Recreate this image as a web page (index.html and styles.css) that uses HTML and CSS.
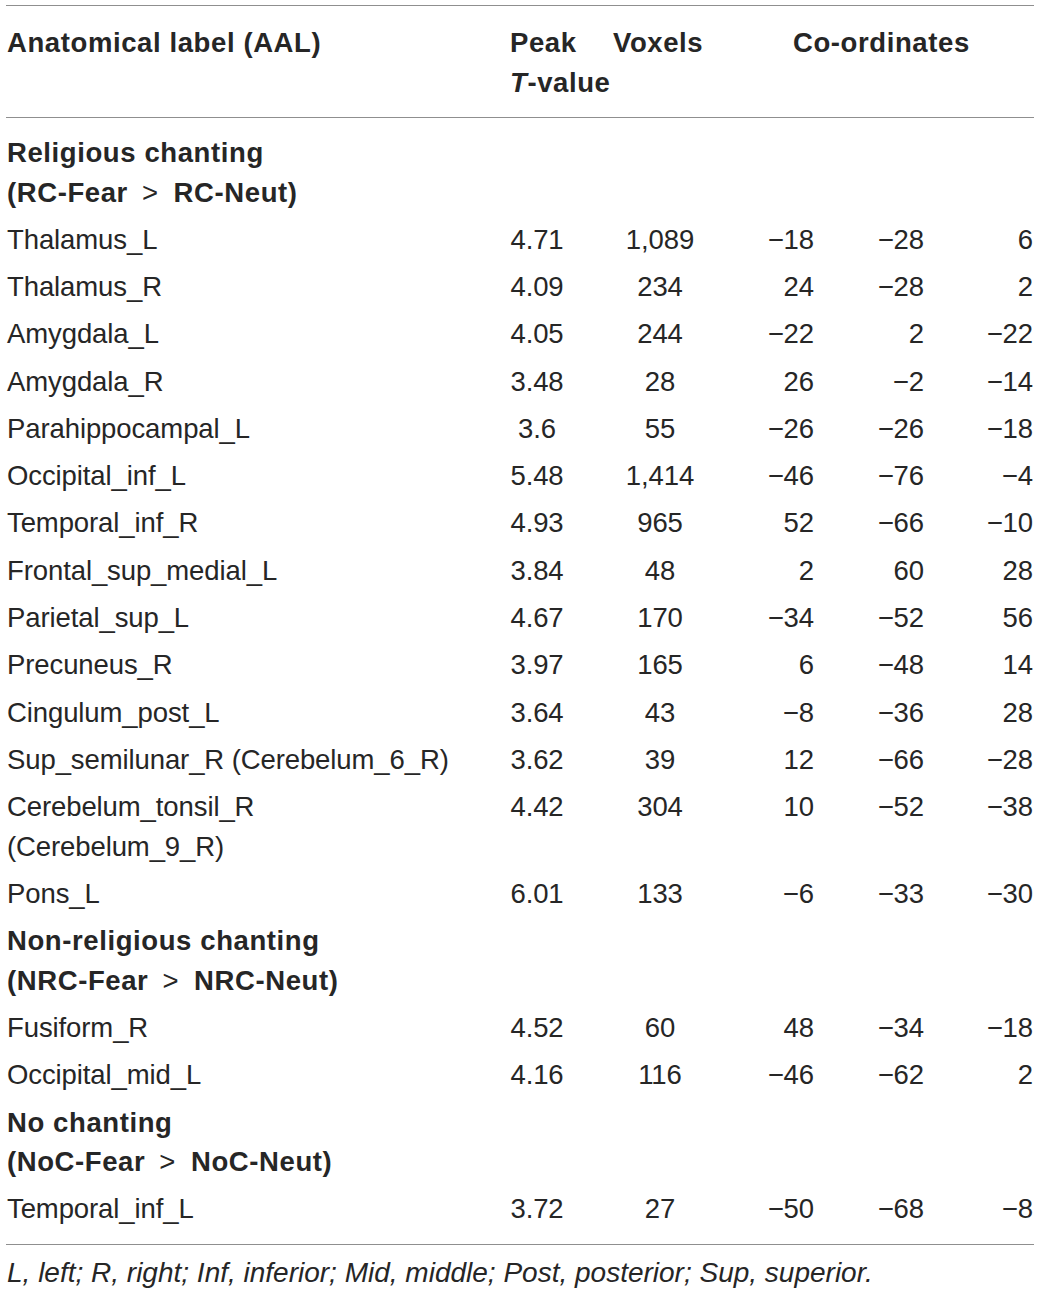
FILE: index.html
```html
<!DOCTYPE html>
<html>
<head>
<meta charset="utf-8">
<link rel="stylesheet" href="styles.css">
</head>
<body>
<div class="wrap">
<table class="tbl">
  <colgroup>
    <col class="c-label">
    <col class="c-peak">
    <col class="c-vox">
    <col class="c-x">
    <col class="c-y">
    <col class="c-z">
  </colgroup>
  <thead>
    <tr>
      <th class="h-label">Anatomical label (AAL)</th>
      <th class="h-peak">Peak<br><i>T</i>-value</th>
      <th class="h-vox">Voxels</th>
      <th class="h-coord" colspan="3">Co-ordinates</th>
    </tr>
  </thead>
  <tbody>
    <tr class="sec"><td colspan="6">Religious chanting<br>(RC-Fear<span class="gt">&gt;</span>RC-Neut)</td></tr>
    <tr><td>Thalamus_L</td><td class="peak">4.71</td><td class="vox">1,089</td><td class="cx">&minus;18</td><td class="cy">&minus;28</td><td class="cz">6</td></tr>
    <tr><td>Thalamus_R</td><td class="peak">4.09</td><td class="vox">234</td><td class="cx">24</td><td class="cy">&minus;28</td><td class="cz">2</td></tr>
    <tr><td>Amygdala_L</td><td class="peak">4.05</td><td class="vox">244</td><td class="cx">&minus;22</td><td class="cy">2</td><td class="cz">&minus;22</td></tr>
    <tr><td>Amygdala_R</td><td class="peak">3.48</td><td class="vox">28</td><td class="cx">26</td><td class="cy">&minus;2</td><td class="cz">&minus;14</td></tr>
    <tr><td>Parahippocampal_L</td><td class="peak">3.6</td><td class="vox">55</td><td class="cx">&minus;26</td><td class="cy">&minus;26</td><td class="cz">&minus;18</td></tr>
    <tr><td>Occipital_inf_L</td><td class="peak">5.48</td><td class="vox">1,414</td><td class="cx">&minus;46</td><td class="cy">&minus;76</td><td class="cz">&minus;4</td></tr>
    <tr><td>Temporal_inf_R</td><td class="peak">4.93</td><td class="vox">965</td><td class="cx">52</td><td class="cy">&minus;66</td><td class="cz">&minus;10</td></tr>
    <tr><td>Frontal_sup_medial_L</td><td class="peak">3.84</td><td class="vox">48</td><td class="cx">2</td><td class="cy">60</td><td class="cz">28</td></tr>
    <tr><td>Parietal_sup_L</td><td class="peak">4.67</td><td class="vox">170</td><td class="cx">&minus;34</td><td class="cy">&minus;52</td><td class="cz">56</td></tr>
    <tr><td>Precuneus_R</td><td class="peak">3.97</td><td class="vox">165</td><td class="cx">6</td><td class="cy">&minus;48</td><td class="cz">14</td></tr>
    <tr><td>Cingulum_post_L</td><td class="peak">3.64</td><td class="vox">43</td><td class="cx">&minus;8</td><td class="cy">&minus;36</td><td class="cz">28</td></tr>
    <tr><td>Sup_semilunar_R (Cerebelum_6_R)</td><td class="peak">3.62</td><td class="vox">39</td><td class="cx">12</td><td class="cy">&minus;66</td><td class="cz">&minus;28</td></tr>
    <tr><td>Cerebelum_tonsil_R<br>(Cerebelum_9_R)</td><td class="peak">4.42</td><td class="vox">304</td><td class="cx">10</td><td class="cy">&minus;52</td><td class="cz">&minus;38</td></tr>
    <tr><td>Pons_L</td><td class="peak">6.01</td><td class="vox">133</td><td class="cx">&minus;6</td><td class="cy">&minus;33</td><td class="cz">&minus;30</td></tr>
    <tr class="sec"><td colspan="6">Non-religious chanting<br>(NRC-Fear<span class="gt">&gt;</span>NRC-Neut)</td></tr>
    <tr><td>Fusiform_R</td><td class="peak">4.52</td><td class="vox">60</td><td class="cx">48</td><td class="cy">&minus;34</td><td class="cz">&minus;18</td></tr>
    <tr><td>Occipital_mid_L</td><td class="peak">4.16</td><td class="vox">116</td><td class="cx">&minus;46</td><td class="cy">&minus;62</td><td class="cz">2</td></tr>
    <tr class="sec"><td colspan="6">No chanting<br>(NoC-Fear<span class="gt">&gt;</span>NoC-Neut)</td></tr>
    <tr class="last"><td>Temporal_inf_L</td><td class="peak">3.72</td><td class="vox">27</td><td class="cx">&minus;50</td><td class="cy">&minus;68</td><td class="cz">&minus;8</td></tr>
  </tbody>
</table>
<p class="note"><i>L, left; R, right; Inf, inferior; Mid, middle; Post, posterior; Sup, superior.</i></p>
</div>
</body>
</html>
```

FILE: styles.css
```css
html, body {
  margin: 0;
  padding: 0;
  background: #ffffff;
}

body {
  font-family: "Liberation Sans", Arial, sans-serif;
  font-size: 27.5px;
  letter-spacing: -0.1px;
  color: #262626;
}

.wrap {
  padding: 5px 6px 0 6px;
}

.tbl {
  width: 1028px;
  border-collapse: collapse;
  table-layout: fixed;
}

.c-label { width: 500px; }
.c-peak { width: 100px; }
.c-vox { width: 114px; }
.c-x { width: 100px; }
.c-y { width: 110px; }
.c-z { width: 104px; }

.tbl th,
.tbl td {
  line-height: 39.5px;
  padding: 3.9px 0;
  vertical-align: top;
  white-space: nowrap;
}

.tbl thead th {
  font-weight: bold;
  letter-spacing: 0.6px;
  text-align: left;
  border-top: 1.5px solid #8f8f8f;
  border-bottom: 1.5px solid #8f8f8f;
  padding-top: 17px;
  padding-bottom: 15px;
}

.tbl .h-label { padding-left: 1px; }
.tbl .h-peak { padding-left: 4px; }
.tbl .h-vox { padding-left: 7px; }
.tbl .h-coord { padding-left: 73px; }

.tbl td { padding-left: 1px; }

.tbl tbody tr:first-child td { padding-top: 15px; }
.tbl tbody tr.last td {
  padding-bottom: 15px;
  border-bottom: 1.5px solid #8f8f8f;
}

.tbl .sec td {
  font-weight: bold;
  letter-spacing: 0.6px;
}

.gt {
  font-weight: normal;
  margin: 0 15px 0 14px;
}

.tbl td.peak {
  text-align: center;
  padding-left: 4px;
  padding-right: 42px;
}

.tbl td.vox {
  text-align: center;
  padding-left: 7px;
  padding-right: 13px;
}

.tbl td.cx { text-align: right; padding-right: 6px; }
.tbl td.cy { text-align: right; padding-right: 6px; }
.tbl td.cz { text-align: right; padding-right: 1px; }

.note {
  margin: 8px 0 0 1px;
  line-height: 39.5px;
  font-size: 28px;
  letter-spacing: 0;
}
```
